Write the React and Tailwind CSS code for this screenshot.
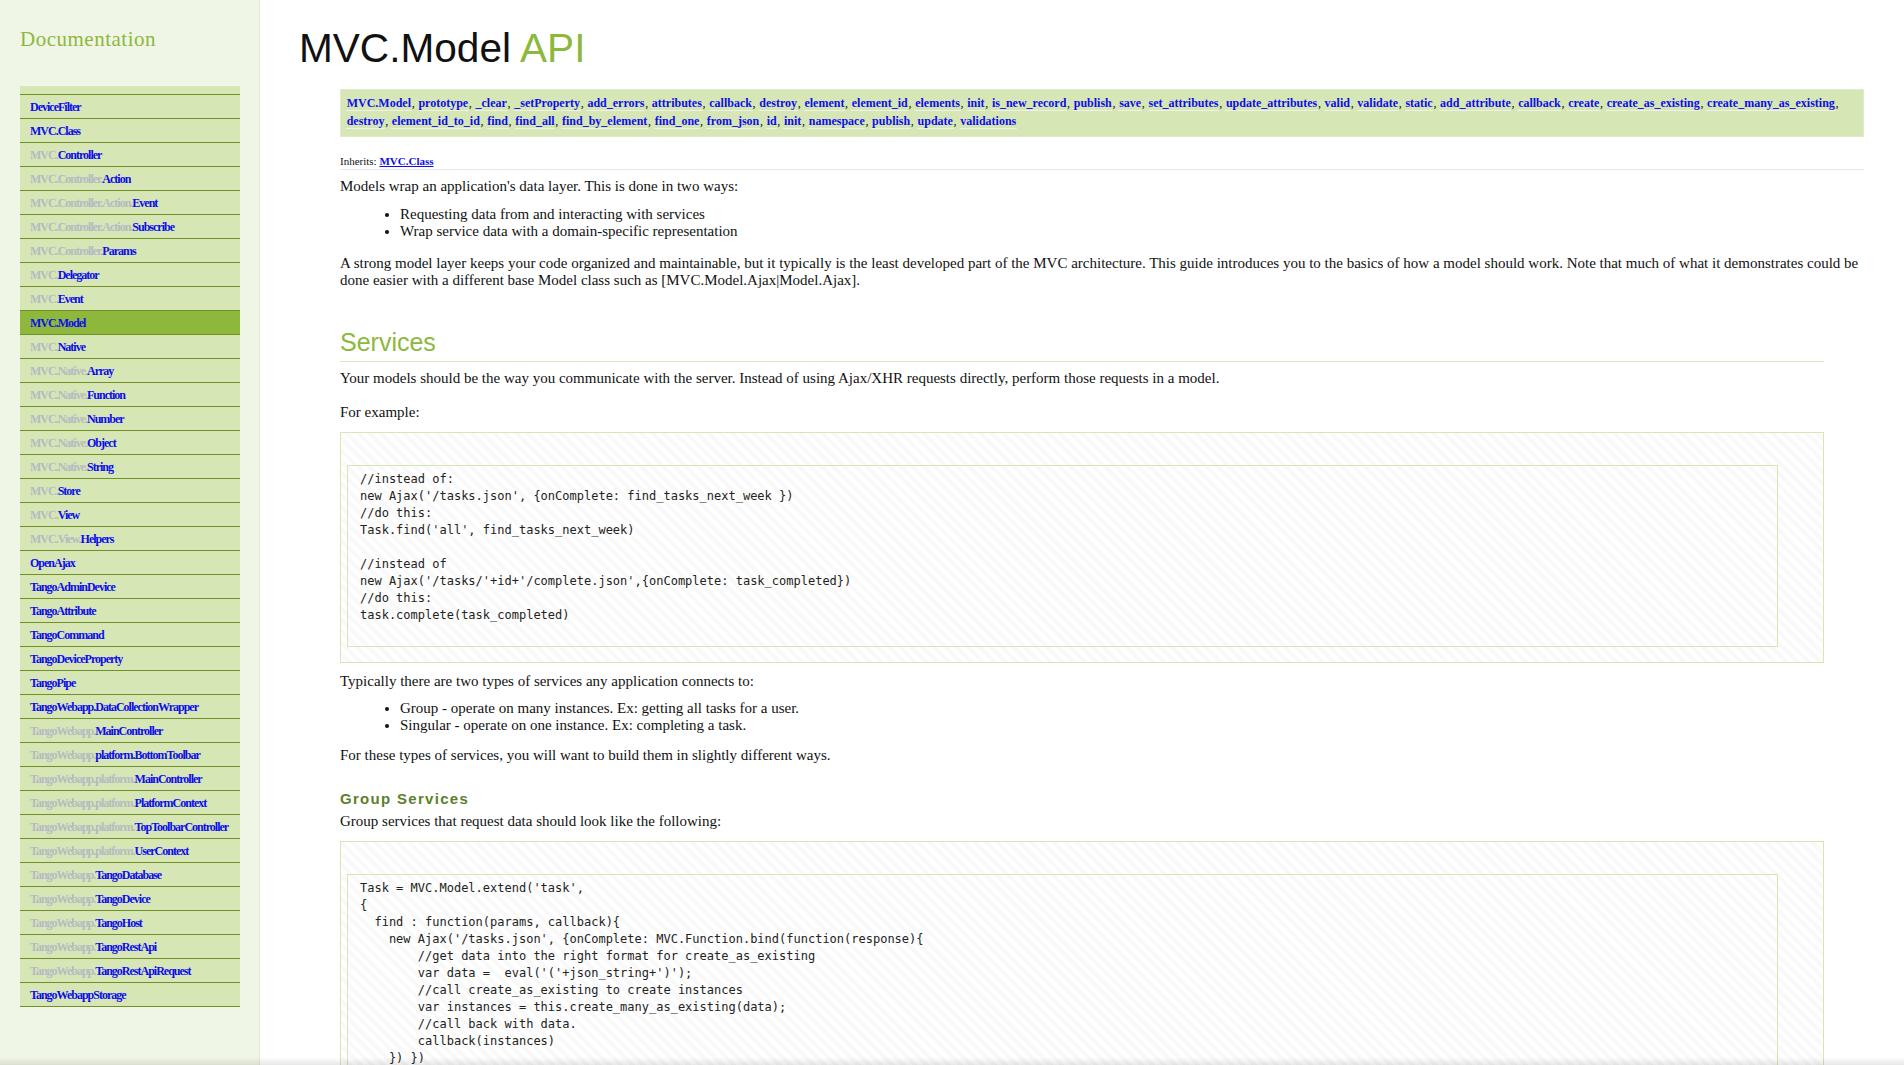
import React from "react";

const NAV = [
  ["", "DeviceFilter"],
  ["", "MVC.Class"],
  ["MVC.", "Controller"],
  ["MVC.Controller.", "Action"],
  ["MVC.Controller.Action.", "Event"],
  ["MVC.Controller.Action.", "Subscribe"],
  ["MVC.Controller.", "Params"],
  ["MVC.", "Delegator"],
  ["MVC.", "Event"],
  ["", "MVC.Model", true],
  ["MVC.", "Native"],
  ["MVC.Native.", "Array"],
  ["MVC.Native.", "Function"],
  ["MVC.Native.", "Number"],
  ["MVC.Native.", "Object"],
  ["MVC.Native.", "String"],
  ["MVC.", "Store"],
  ["MVC.", "View"],
  ["MVC.View.", "Helpers"],
  ["", "OpenAjax"],
  ["", "TangoAdminDevice"],
  ["", "TangoAttribute"],
  ["", "TangoCommand"],
  ["", "TangoDeviceProperty"],
  ["", "TangoPipe"],
  ["", "TangoWebapp.DataCollectionWrapper"],
  ["TangoWebapp.", "MainController"],
  ["TangoWebapp.", "platform.BottomToolbar"],
  ["TangoWebapp.platform.", "MainController"],
  ["TangoWebapp.platform.", "PlatformContext"],
  ["TangoWebapp.platform.", "TopToolbarController"],
  ["TangoWebapp.platform.", "UserContext"],
  ["TangoWebapp.", "TangoDatabase"],
  ["TangoWebapp.", "TangoDevice"],
  ["TangoWebapp.", "TangoHost"],
  ["TangoWebapp.", "TangoRestApi"],
  ["TangoWebapp.", "TangoRestApiRequest"],
  ["", "TangoWebappStorage"],
];

const METHODS = [
  "MVC.Model", "prototype", "_clear", "_setProperty", "add_errors", "attributes", "callback",
  "destroy", "element", "element_id", "elements", "init", "is_new_record", "publish", "save",
  "set_attributes", "update_attributes", "valid", "validate", "static", "add_attribute",
  "callback", "create", "create_as_existing", "create_many_as_existing", "destroy",
  "element_id_to_id", "find", "find_all", "find_by_element", "find_one", "from_json", "id",
  "init", "namespace", "publish", "update", "validations",
];

const CODE1 = [
  "//instead of:",
  "new Ajax('/tasks.json', {onComplete: find_tasks_next_week })",
  "//do this:",
  "Task.find('all', find_tasks_next_week)",
  "",
  "//instead of",
  "new Ajax('/tasks/'+id+'/complete.json',{onComplete: task_completed})",
  "//do this:",
  "task.complete(task_completed)",
  " ",
].join("\n");

const CODE2 = [
  "Task = MVC.Model.extend('task',",
  "{",
  "  find : function(params, callback){",
  "    new Ajax('/tasks.json', {onComplete: MVC.Function.bind(function(response){",
  "        //get data into the right format for create_as_existing",
  "        var data =  eval('('+json_string+')');",
  "        //call create_as_existing to create instances",
  "        var instances = this.create_many_as_existing(data);",
  "        //call back with data.",
  "        callback(instances)",
  "    }) })",
  "  }",
  "},",
  "{})",
  " ",
].join("\n");

function CodeBox({ code }) {
  return (
    <div className="mr-[40px] border border-[#d6e6b5] pt-[32px] pl-[6px] pr-[45px] pb-[15px] bg-[repeating-linear-gradient(45deg,#ffffff_0px,#ffffff_4px,#f9f9f9_4px,#f9f9f9_8px)]">
      <pre className="border border-[#d6e6b5] pt-[5px] pl-[12px] pb-[5px] text-[12px] leading-[17px] text-[#222] font-['DejaVu_Sans_Mono',monospace] whitespace-pre bg-[repeating-linear-gradient(45deg,#ffffff_0px,#ffffff_4px,#f9f9f9_4px,#f9f9f9_8px)]">
        {code}
      </pre>
    </div>
  );
}

export default function App() {
  return (
    <div className="flex min-h-screen bg-white font-['Liberation_Serif',serif] text-[#111]">
      <aside className="w-[260px] shrink-0 bg-[#f0f6e5] border-r border-[#e1ead1]">
        <h1 className="mt-[27px] ml-[20px] text-[21px] leading-[24px] tracking-[0.5px] text-[#8db83e] font-['Liberation_Serif',serif] font-normal">
          Documentation
        </h1>
        <ul className="mt-[35px] ml-[20px] w-[220px] pt-[8px] bg-[#d6e6b5] border-b border-[#6f9128]">
          {NAV.map(([pre, name, active], i) => (
            <li
              key={i}
              className={
                active
                  ? "h-[24px] border-t border-[#6f9128] bg-[#8db83c] pl-[10px] flex items-center text-[12px] font-bold tracking-[-1px] whitespace-nowrap"
                  : "h-[24px] border-t border-[#6f9128] pl-[10px] flex items-center text-[12px] font-bold tracking-[-1px] whitespace-nowrap"
              }
            >
              {pre && <span className="text-[#b4bbc3]">{pre}</span>}
              <span className="text-[#0d0dee]">{name}</span>
            </li>
          ))}
        </ul>
      </aside>

      <main className="flex-1 min-w-0 pl-[39px] pr-[40px] pb-[40px]">
        <h1 className="mt-[25px] text-[40.6px] leading-[46px] font-normal font-['Liberation_Sans',sans-serif] text-[#111]">
          MVC.Model <span className="text-[#8db83e]">API</span>
        </h1>

        <div className="ml-[41px]">
          <div className="mt-[18px] bg-[#d6e6b5] border border-[#e0ebcb] pt-[4px] pb-[6px] px-[5px] text-[12px] leading-[18px]">
            {METHODS.map((m, i) => (
              <React.Fragment key={i}>
                <a className="px-[0.7px] font-bold text-[#0d0dee] border-b border-[#eef3e4] cursor-pointer">{m}</a>
                {i < METHODS.length - 1 ? ", " : ""}
              </React.Fragment>
            ))}
          </div>

          <div className="mt-[18px] text-[11px] leading-[13px] pb-[1px] border-b border-[#e8e8e8]">
            Inherits: <a className="font-bold text-[#0d0dee] underline cursor-pointer">MVC.Class</a>
          </div>

          <p className="mt-[8px] text-[15px] leading-[17px]">
            Models wrap an application's data layer. This is done in two ways:
          </p>
          <ul className="mt-[11px] mb-[15px] pl-[60px] list-disc text-[15px] leading-[17px]">
            <li>Requesting data from and interacting with services</li>
            <li>Wrap service data with a domain-specific representation</li>
          </ul>
          <p className="text-[15px] leading-[17px]">
            A strong model layer keeps your code organized and maintainable, but it typically is the least
            developed part of the MVC architecture. This guide introduces you to the basics of how a model should
            work. Note that much of what it demonstrates could be done easier with a different base Model class
            such as [MVC.Model.Ajax|Model.Ajax].
          </p>

          <h2 className="mt-[39px] mr-[40px] pb-[4px] border-b border-[#dce8c5] text-[25px] leading-[29px] font-normal text-[#8db83e] font-['Liberation_Sans',sans-serif]">
            Services
          </h2>
          <p className="mt-[8px] text-[15px] leading-[17px]">
            Your models should be the way you communicate with the server. Instead of using Ajax/XHR requests
            directly, perform those requests in a model.
          </p>
          <p className="mt-[17px] text-[15px] leading-[17px]">For example:</p>
          <div className="mt-[11px]">
            <CodeBox code={CODE1} />
          </div>

          <p className="mt-[10px] text-[15px] leading-[17px]">
            Typically there are two types of services any application connects to:
          </p>
          <ul className="mt-[10px] mb-[13px] pl-[60px] list-disc text-[15px] leading-[17px]">
            <li>Group - operate on many instances. Ex: getting all tasks for a user.</li>
            <li>Singular - operate on one instance. Ex: completing a task.</li>
          </ul>
          <p className="text-[15px] leading-[17px]">
            For these types of services, you will want to build them in slightly different ways.
          </p>

          <h3 className="mt-[26px] text-[15px] leading-[18px] font-bold tracking-[1.3px] text-[#5d7f2c] font-['Liberation_Sans',sans-serif]">
            Group Services
          </h3>
          <p className="mt-[5px] text-[15px] leading-[17px]">
            Group services that request data should look like the following:
          </p>
          <div className="mt-[11px]">
            <CodeBox code={CODE2} />
          </div>
        </div>
      </main>

      <div className="fixed left-0 right-0 bottom-0 h-[8px] pointer-events-none bg-[linear-gradient(to_bottom,rgba(0,0,0,0),rgba(0,0,0,0.09))]" />
    </div>
  );
}
